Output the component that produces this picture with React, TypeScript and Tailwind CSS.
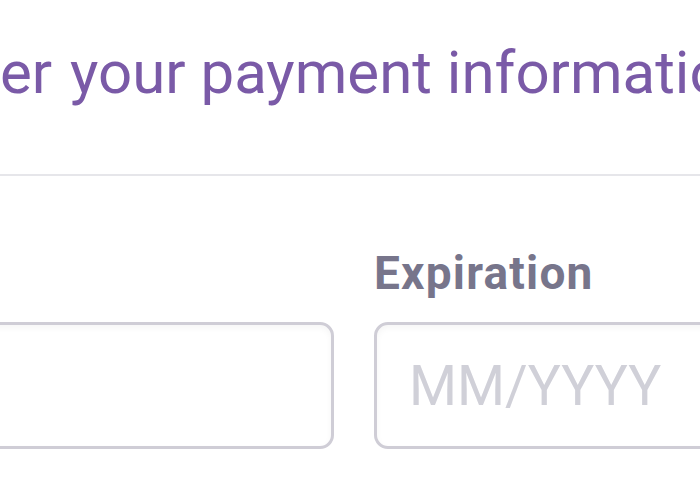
export default function App() {
  return (
    <div className="w-[700px] h-[500px] overflow-hidden bg-white relative" style={{ fontFamily: 'Roboto, "Noto Sans", sans-serif' }}>
      <div className="flex items-baseline pt-[33px] h-[120px] whitespace-nowrap text-[60px] leading-[80px] text-[#7a5aa7] font-normal">
        <div className="w-[70px] shrink-0 flex justify-end pr-[3px]">
          <span>Enter&nbsp;</span>
        </div>
        <span>your payment information</span>
      </div>
      <div className="mt-[54px] h-[2px] bg-[#e6e6ea] w-full" />
      <div className="flex gap-[40px] mt-[76px]">
        <div className="w-[334px] shrink-0 flex flex-col">
          <div className="h-[70px]" />
          <div className="ml-[-200px] h-[127px] rounded-[14px] border-[3px] border-[#cfcdd6] shadow-[inset_0_3px_6px_rgba(0,0,0,0.04)]" />
        </div>
        <div className="w-[400px] shrink-0 flex flex-col">
          <label className="h-[70px] text-[46px] leading-[42px] font-bold tracking-[1.2px] text-[#77758b]">Expiration</label>
          <div className="h-[127px] rounded-[14px] border-[3px] border-[#cfcdd6] shadow-[inset_0_3px_6px_rgba(0,0,0,0.04)] flex items-center pl-[32px] pt-[2px] text-[55px] text-[#d0d0d8]">
            MM/YYYY
          </div>
        </div>
      </div>
    </div>
  );
}
